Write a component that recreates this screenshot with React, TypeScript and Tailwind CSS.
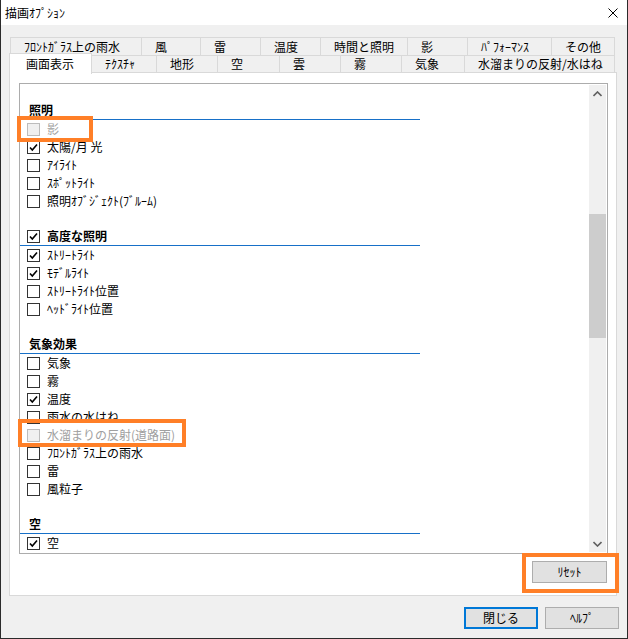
import React from "react";

type Item = { label: string; checked?: boolean; disabled?: boolean };
type Section = { title: string; check?: boolean; items: Item[] };

const sections: Section[] = [
  {
    title: "照明",
    items: [
      { label: "影", disabled: true },
      { label: "太陽/月 光", checked: true },
      { label: "ｱｲﾗｲﾄ" },
      { label: "ｽﾎﾟｯﾄﾗｲﾄ" },
      { label: "照明ｵﾌﾞｼﾞｪｸﾄ(ﾌﾞﾙｰﾑ)" },
    ],
  },
  {
    title: "高度な照明",
    check: true,
    items: [
      { label: "ｽﾄﾘｰﾄﾗｲﾄ", checked: true },
      { label: "ﾓﾃﾞﾙﾗｲﾄ", checked: true },
      { label: "ｽﾄﾘｰﾄﾗｲﾄ位置" },
      { label: "ﾍｯﾄﾞﾗｲﾄ位置" },
    ],
  },
  {
    title: "気象効果",
    items: [
      { label: "気象" },
      { label: "霧" },
      { label: "温度", checked: true },
      { label: "雨水の水はね" },
      { label: "水溜まりの反射(道路面)", disabled: true },
      { label: "ﾌﾛﾝﾄｶﾞﾗｽ上の雨水" },
      { label: "雷" },
      { label: "風粒子" },
    ],
  },
  { title: "空", items: [{ label: "空", checked: true }] },
];

const backTabs = [
  { label: "ﾌﾛﾝﾄｶﾞﾗｽ上の雨水", w: "w-[131px]" },
  { label: "風", w: "w-[59px]" },
  { label: "雷", w: "w-[60px]" },
  { label: "温度", w: "w-[60px]" },
  { label: "時間と照明", w: "w-[87px]" },
  { label: "影", w: "w-[60px]" },
  { label: "ﾊﾟﾌｫｰﾏﾝｽ", w: "w-[84px]" },
  { label: "その他", w: "w-[64px]" },
];

const frontTabs = [
  { label: "ﾃｸｽﾁｬ", w: "w-[65px]" },
  { label: "地形", w: "w-[61px]" },
  { label: "空", w: "w-[62px]" },
  { label: "雲", w: "w-[61px]" },
  { label: "霧", w: "w-[61px]" },
  { label: "気象", w: "w-[63px]" },
  { label: "水溜まりの反射/水はね", w: "w-[150px]" },
];

function CheckBox({ checked, disabled }: { checked?: boolean; disabled?: boolean }) {
  return (
    <span
      className={
        disabled
          ? "w-[13px] h-[13px] shrink-0 border border-[#bcbcbc] bg-[#f0f0f0]"
          : "w-[13px] h-[13px] shrink-0 border border-[#333333] bg-white flex items-center justify-center"
      }
    >
      {checked && (
        <svg width="11" height="11" viewBox="0 0 11 11">
          <path d="M2 5.5 L4.3 8 L9 2.5" fill="none" stroke="#000" strokeWidth="1.6" />
        </svg>
      )}
    </span>
  );
}

export default function App() {
  return (
    <div className="relative w-[628px] h-[639px] bg-[#f0f0f0] border-x border-b border-[#2b2b2b] flex flex-col text-[12px] text-black font-['Noto_Sans_CJK_JP','Noto_Sans',sans-serif] leading-none">
      {/* title bar */}
      <div className="h-[25px] bg-white flex items-center justify-between pl-[4px] pr-[9px]">
        <span>描画ｵﾌﾟｼｮﾝ</span>
        <svg width="10" height="10" viewBox="0 0 10 10">
          <path d="M0.5 0.5 L9.5 9.5 M9.5 0.5 L0.5 9.5" stroke="#000" strokeWidth="1" />
        </svg>
      </div>

      {/* tabs */}
      <div className="mt-[12px] ml-[9px] flex h-[18px]">
        {backTabs.map((t, i) => (
          <div
            key={t.label}
            className={`${t.w} h-full border-t border-l ${i === backTabs.length - 1 ? "border-r" : ""} border-[#d9d9d9] flex items-center pl-[13px] whitespace-nowrap`}
          >
            {t.label}
          </div>
        ))}
      </div>
      <div className="ml-[8px] flex h-[17px]">
        <div className="relative z-10 w-[83px] h-[21px] -mt-[2px] bg-white border-t border-x border-[#d9d9d9] flex items-center pl-[16px]">
          画面表示
        </div>
        {frontTabs.map((t) => (
          <div
            key={t.label}
            className={`${t.w} h-full border-t border-r border-[#d9d9d9] flex items-center pl-[13px] whitespace-nowrap`}
          >
            {t.label}
          </div>
        ))}
      </div>

      {/* tab page */}
      <div className="ml-[8px] w-[608px] h-[524px] bg-white border border-[#d9d9d9] pt-[10px] pl-[9px] pr-[8px] flex flex-col">
        <div className="h-[471px] border border-[#acacac] flex overflow-hidden">
          <div className="flex-1 pt-[17px] flex flex-col gap-[17px]">
            {sections.map((s) => (
              <div key={s.title} className="flex flex-col">
                <div
                  className={`h-[18px] flex items-center font-bold gap-[7px] ${s.check ? "pl-[7px]" : "pl-[9px]"}`}
                >
                  {s.check && <CheckBox checked />}
                  <span>{s.title}</span>
                </div>
                <div className="w-[400px] h-px bg-[#1770c8]" />
                {s.items.map((it) => (
                  <div key={it.label} className="h-[18px] flex items-center pl-[7px] gap-[7px]">
                    <CheckBox checked={it.checked} disabled={it.disabled} />
                    <span className={it.disabled ? "text-[#a0a0a0]" : ""}>{it.label}</span>
                  </div>
                ))}
              </div>
            ))}
          </div>
          {/* scrollbar */}
          <div className="w-[17px] mr-[1px] my-[1px] bg-[#f0f0f0] flex flex-col">
            <div className="h-[17px] flex items-center justify-center">
              <svg width="9" height="6" viewBox="0 0 9 6">
                <path d="M0.5 5 L4.5 1 L8.5 5" fill="none" stroke="#606060" strokeWidth="1.6" />
              </svg>
            </div>
            <div className="flex-1">
              <div className="mt-[112px] h-[124px] bg-[#cdcdcd]" />
            </div>
            <div className="h-[17px] flex items-center justify-center">
              <svg width="9" height="6" viewBox="0 0 9 6">
                <path d="M0.5 1 L4.5 5 L8.5 1" fill="none" stroke="#606060" strokeWidth="1.6" />
              </svg>
            </div>
          </div>
        </div>
        <div className="mt-[7px] flex justify-end pr-[1px]">
          <button
            type="button"
            className="w-[75px] h-[22px] bg-[#e1e1e1] border border-[#adadad] flex items-center justify-center"
          >
            ﾘｾｯﾄ
          </button>
        </div>
      </div>

      {/* bottom buttons */}
      <div className="mt-[11px] flex justify-end gap-[7px] pr-[8px]">
        <button
          type="button"
          className="w-[74px] h-[22px] bg-[#e1e1e1] border-2 border-[#0078d7] flex items-center justify-center"
        >
          閉じる
        </button>
        <button
          type="button"
          className="w-[74px] h-[22px] bg-[#e1e1e1] border border-[#adadad] flex items-center justify-center"
        >
          ﾍﾙﾌﾟ
        </button>
      </div>

      {/* annotation highlights */}
      <div className="absolute left-[16px] top-[116px] w-[76px] h-[26px] border-4 border-[#ff7f27]" />
      <div className="absolute left-[17px] top-[419px] w-[168px] h-[28px] border-4 border-[#ff7f27]" />
      <div className="absolute left-[521px] top-[553px] w-[97px] h-[40px] border-4 border-[#ff7f27]" />
    </div>
  );
}
